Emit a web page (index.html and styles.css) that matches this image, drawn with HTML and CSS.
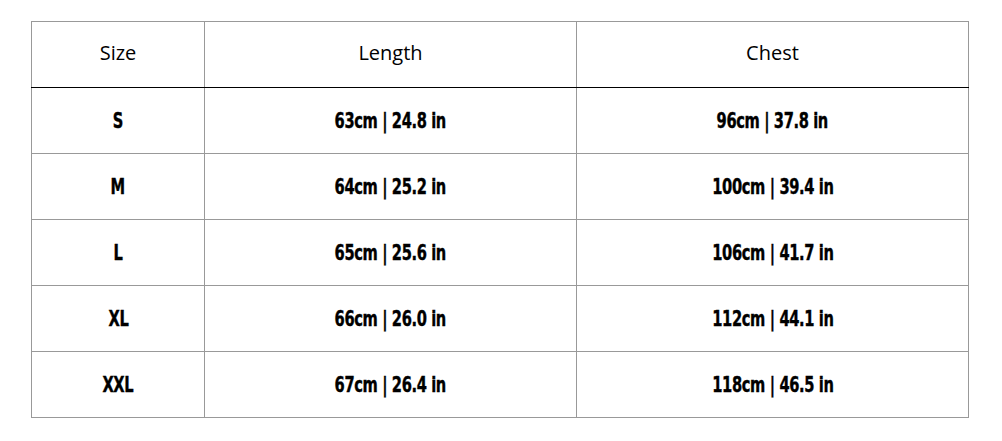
FILE: index.html
```html
<!DOCTYPE html>
<html>
<head>
<meta charset="utf-8">
<link rel="stylesheet" href="styles.css">
</head>
<body>
<table class="size-table">
  <colgroup>
    <col class="c1">
    <col class="c2">
    <col class="c3">
  </colgroup>
  <thead>
    <tr><th>Size</th><th>Length</th><th>Chest</th></tr>
  </thead>
  <tbody>
    <tr><td><span class="v">S</span></td><td><span class="v">63cm | 24.8 in</span></td><td><span class="v">96cm | 37.8 in</span></td></tr>
    <tr><td><span class="v">M</span></td><td><span class="v">64cm | 25.2 in</span></td><td><span class="v">100cm | 39.4 in</span></td></tr>
    <tr><td><span class="v">L</span></td><td><span class="v">65cm | 25.6 in</span></td><td><span class="v">106cm | 41.7 in</span></td></tr>
    <tr><td><span class="v">XL</span></td><td><span class="v">66cm | 26.0 in</span></td><td><span class="v">112cm | 44.1 in</span></td></tr>
    <tr><td><span class="v">XXL</span></td><td><span class="v">67cm | 26.4 in</span></td><td><span class="v">118cm | 46.5 in</span></td></tr>
  </tbody>
</table>
</body>
</html>
```
FILE: styles.css
```css
html, body {
  margin: 0;
  padding: 0;
  background: #fff;
}
body {
  padding: 21px 0 0 31px;
}
.size-table {
  border-collapse: collapse;
  table-layout: fixed;
  width: 937px;
}
.c1 { width: 173px; }
.c2 { width: 372px; }
.c3 { width: 392px; }
.size-table th,
.size-table td {
  border: 1px solid #999;
  height: 65px;
  padding: 0;
  text-align: center;
  vertical-align: middle;
  color: #000;
}
.size-table th {
  font-family: "Open Sans", "Noto Sans", sans-serif;
  font-weight: 400;
  font-size: 20px;
  padding-bottom: 4px;
  height: 61px;
  border-bottom: 1px solid #000;
}
.size-table td {
  font-family: "DejaVu Sans Condensed", "DejaVu Sans", sans-serif;
  font-stretch: condensed;
  font-weight: 700;
  font-size: 22px;
}
.v {
  display: inline-block;
  transform: scaleX(0.74);
  letter-spacing: -0.5px;
  -webkit-text-stroke: 0.4px #000;
}
```
